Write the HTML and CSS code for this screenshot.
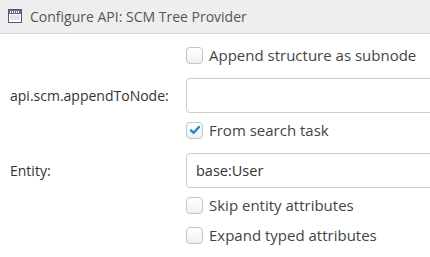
FILE: index.html
```html
<!DOCTYPE html>
<html>
<head>
<meta charset="utf-8">
<link rel="stylesheet" href="styles.css">
</head>
<body>
<div class="header">
  <svg class="hicon" width="14" height="14" viewBox="0 0 14 14">
    <rect x="0.5" y="0.5" width="13" height="13" fill="#fff" stroke="#5b4f8a"/>
    <rect x="1" y="1" width="12" height="4" fill="#6d6a7a"/>
    <rect x="2" y="2" width="1" height="2" fill="#fff"/>
    <rect x="4" y="2" width="1" height="2" fill="#fff"/>
    <rect x="6" y="2" width="1" height="2" fill="#fff"/>
    <rect x="8" y="2" width="1" height="2" fill="#fff"/>
    <rect x="10" y="2" width="1" height="2" fill="#fff"/>
    <rect x="2" y="6" width="10" height="5" fill="#e2e2e2"/>
  </svg>
  <span class="title">Configure API: SCM Tree Provider</span>
</div>
<div class="form">
  <div class="row cbrow first">
    <div class="label"></div>
    <label class="cb"><span class="box"></span><span>Append structure as subnode</span></label>
  </div>
  <div class="row inrow">
    <div class="label">api.scm.appendToNode:</div>
    <div class="input"></div>
  </div>
  <div class="row cbrow">
    <div class="label"></div>
    <label class="cb"><span class="box checked"><svg width="12" height="10" viewBox="0 0 12 10"><path d="M2 5.3 L4.7 7.8 L10 2" fill="none" stroke="#1d8ac6" stroke-width="2.4" stroke-linecap="round" stroke-linejoin="round"/></svg></span><span>From search task</span></label>
  </div>
  <div class="row inrow">
    <div class="label">Entity:</div>
    <div class="input">base:User</div>
  </div>
  <div class="row cbrow">
    <div class="label"></div>
    <label class="cb"><span class="box"></span><span>Skip entity attributes</span></label>
  </div>
  <div class="row cbrow next">
    <div class="label"></div>
    <label class="cb"><span class="box"></span><span>Expand typed attributes</span></label>
  </div>
</div>
</body>
</html>
```
FILE: styles.css
```css
html, body {
  margin: 0;
  padding: 0;
  background: #fff;
  overflow: hidden;
  font-family: "Open Sans", "DejaVu Sans", sans-serif;
  font-size: 14px;
  color: #444;
}
.header {
  height: 33px;
  background: #eeeeee;
  border-bottom: 1px solid #d8d8d8;
  display: flex;
  align-items: center;
  padding-left: 8px;
  box-sizing: content-box;
}
.hicon {
  display: block;
  margin-right: 8px;
  margin-top: -1px;
}
.title {
  color: #555;
  font-size: 14px;
}
.form {
  display: flex;
  flex-direction: column;
  padding-left: 10px;
}
.row {
  display: flex;
  align-items: center;
}
.label {
  width: 176px;
  flex: none;
  color: #333;
}
.cbrow {
  height: 24px;
  margin-top: 5px;
}
.cbrow.first {
  margin-top: 9px;
}
.cbrow.next {
  margin-top: 6px;
}
.inrow {
  height: 35px;
  margin-top: 11px;
}
.input {
  width: 260px;
  height: 35px;
  box-sizing: border-box;
  border: 1px solid #cccccc;
  border-radius: 4px;
  padding: 0 9px;
  display: flex;
  align-items: center;
  color: #333;
  font-size: 14.5px;
  flex: none;
}
.cb {
  display: flex;
  align-items: center;
  color: #444;
  font-size: 15px;
}
.box {
  width: 17px;
  height: 17px;
  box-sizing: border-box;
  border: 1px solid #c4c4c4;
  border-radius: 4px;
  background: linear-gradient(#ffffff, #f0f0f0);
  margin-right: 6px;
  display: flex;
  align-items: center;
  justify-content: center;
  flex: none;
}
.box svg {
  display: block;
}
```
